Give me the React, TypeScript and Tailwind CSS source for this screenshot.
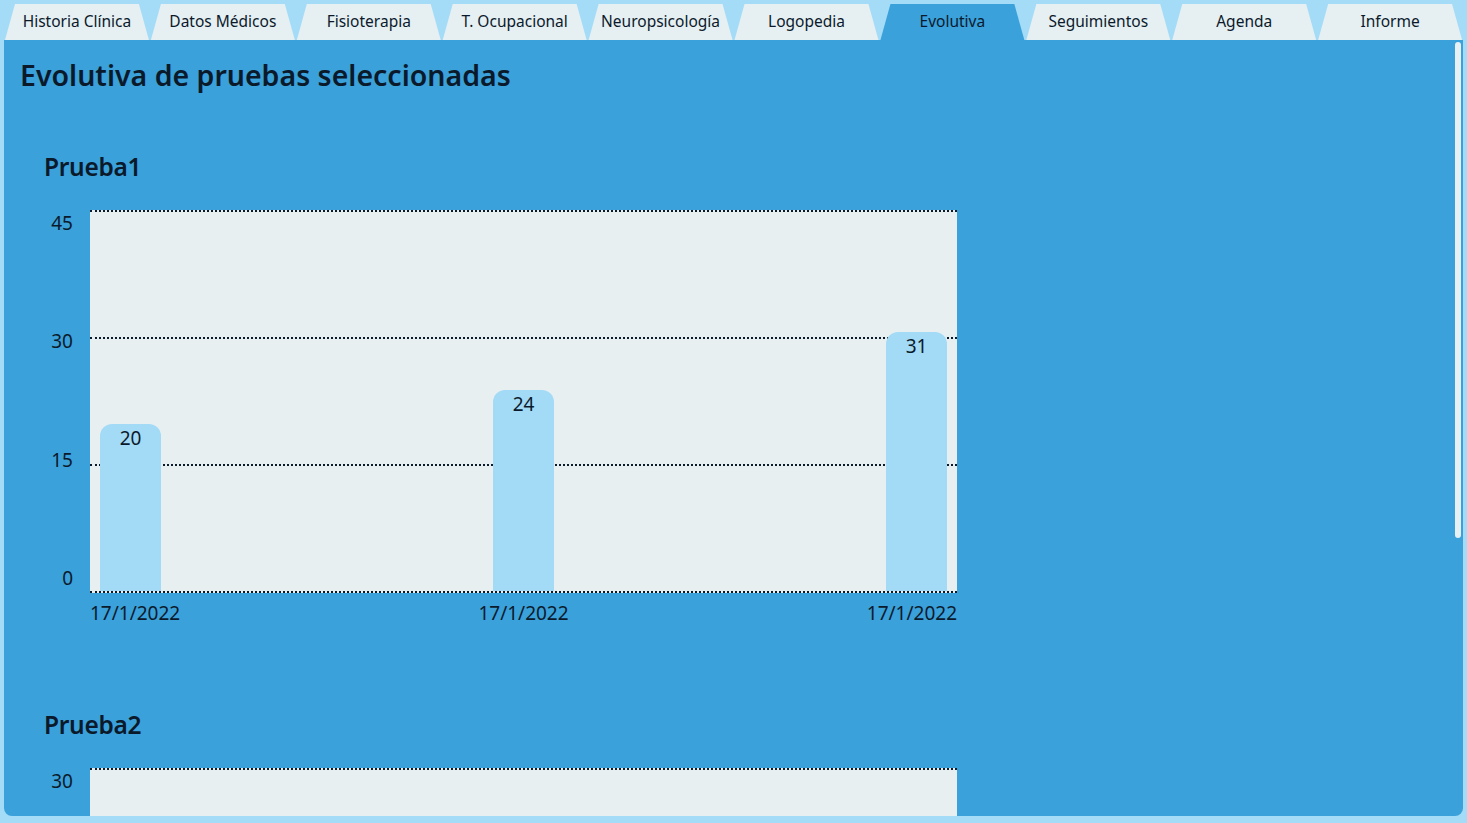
import React from "react";

const tabs = [
  "Historia Clínica",
  "Datos Médicos",
  "Fisioterapia",
  "T. Ocupacional",
  "Neuropsicología",
  "Logopedia",
  "Evolutiva",
  "Seguimientos",
  "Agenda",
  "Informe",
];

type Chart = {
  name: string;
  max: number;
  ticks: number[];
  values: { date: string; value: number }[];
};

const charts: Chart[] = [
  {
    name: "Prueba1",
    max: 45,
    ticks: [45, 30, 15, 0],
    values: [
      { date: "17/1/2022", value: 20 },
      { date: "17/1/2022", value: 24 },
      { date: "17/1/2022", value: 31 },
    ],
  },
  {
    name: "Prueba2",
    max: 30,
    ticks: [30, 20, 10, 0],
    values: [
      { date: "17/1/2022", value: 12 },
      { date: "17/1/2022", value: 18 },
      { date: "17/1/2022", value: 22 },
    ],
  },
];

function BarChart({ chart }: { chart: Chart }) {
  return (
    <div className="pl-10">
      <h2 className="text-[24.5px] leading-8 font-semibold text-[#0b1a2b] tracking-[-0.3px]">{chart.name}</h2>
      <div className="mt-[27px] flex">
        <div className="w-[29px] mr-[17px] h-[381px] flex flex-col justify-between items-end text-[19px] leading-[26px] text-[#0b1a2b]">
          {chart.ticks.map((t) => (
            <span key={t}>{t}</span>
          ))}
        </div>
        <div className="w-[867px]">
          <div className="relative h-[383px] bg-[#e7eff1] border-b-2 border-dotted border-[#0b1a2b]">
            <div className="absolute left-0 right-0 top-0 border-t-2 border-dotted border-[#0b1a2b]" />
            <div className="absolute left-0 right-0 top-[127px] border-t-2 border-dotted border-[#0b1a2b]" />
            <div className="absolute left-0 right-0 top-[254px] border-t-2 border-dotted border-[#0b1a2b]" />
            <div className="relative h-full px-[10px] flex items-end justify-between">
              {chart.values.map((v, i) => (
                <div
                  key={i}
                  className="w-[61px] bg-[#a3dbf7] rounded-t-[12px] flex justify-center pt-[1px] text-[19px] leading-[26px] text-[#0b1a2b]"
                  style={{ height: (v.value / chart.max) * 376 }}
                >
                  {v.value}
                </div>
              ))}
            </div>
          </div>
          <div className="mt-[7px] flex justify-between text-[19px] leading-[26px] text-[#0b1a2b]">
            {chart.values.map((v, i) => (
              <span key={i}>{v.date}</span>
            ))}
          </div>
        </div>
      </div>
    </div>
  );
}

export default function App() {
  return (
    <div
      className="h-screen bg-[#a4dcf8] flex flex-col pl-1 pr-1 pt-1 pb-[7px]"
      style={{ fontFamily: '"Noto Sans", "Open Sans", sans-serif' }}
    >
      <div className="h-9 flex shrink-0">
        {tabs.map((t) => (
          <div
            key={t}
            className={
              "flex-1 flex items-center justify-center pb-[1px] text-[15.5px] text-[#0b1a2b] [clip-path:polygon(11px_0,calc(100%-11px)_0,calc(100%-1px)_100%,1px_100%)] " +
              (t === "Evolutiva" ? "bg-[#3aa1db]" : "bg-[#e6eff2]")
            }
          >
            {t}
          </div>
        ))}
      </div>
      <div className="relative flex-1 bg-[#3aa1db] rounded-b-lg overflow-hidden">
        <div className="pl-4 pt-[15px]">
          <h1 className="text-[28.5px] leading-10 font-semibold text-[#0b1a2b]">
            Evolutiva de pruebas seleccionadas
          </h1>
        </div>
        <div className="mt-14 flex flex-col gap-[83px]">
          {charts.map((c) => (
            <BarChart key={c.name} chart={c} />
          ))}
        </div>
        <div className="absolute right-[2px] top-[2px] w-[6px] h-[496px] rounded-full bg-[#e6f0f5]" />
      </div>
    </div>
  );
}
